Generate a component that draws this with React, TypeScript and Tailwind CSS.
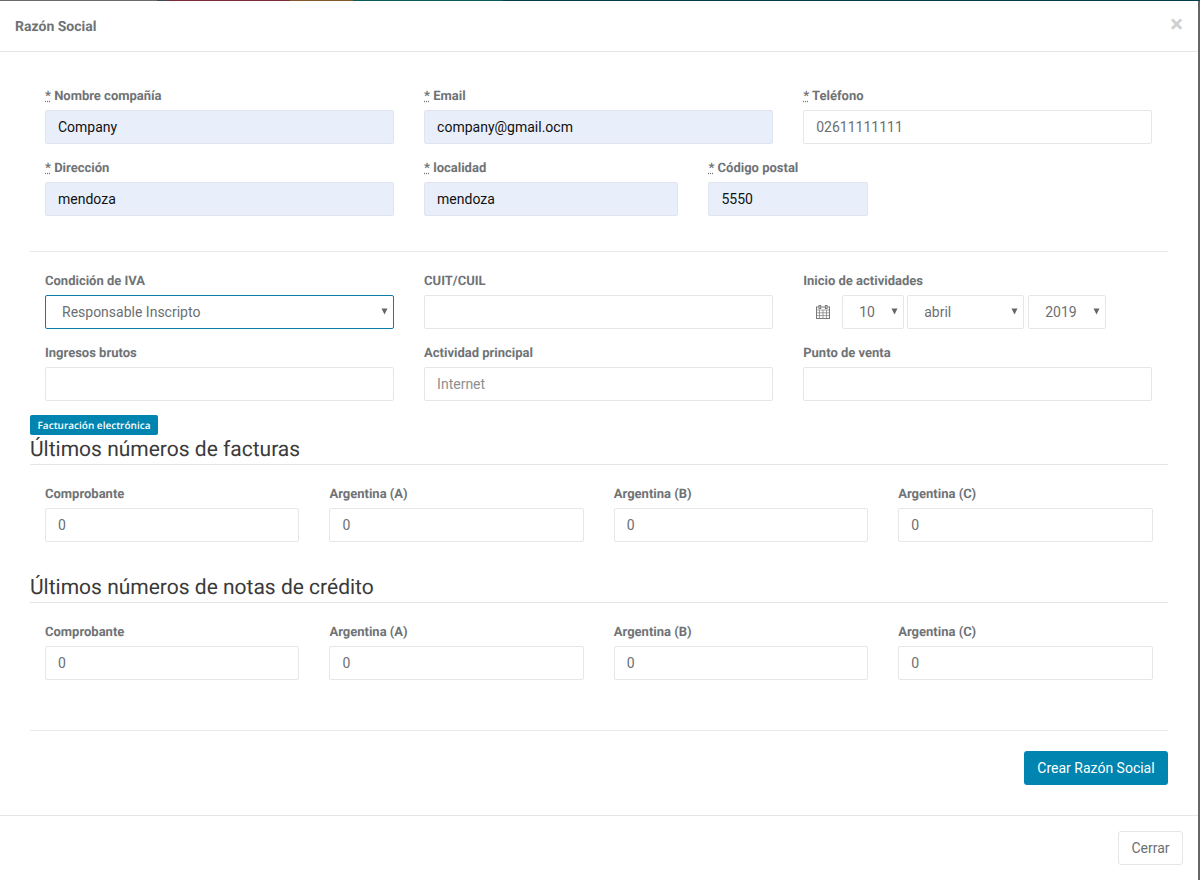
import React from "react";

const inputCls =
  "block w-full h-[34px] border border-[#e6e6e6] rounded-[2px] px-[12px] text-[14px] text-[#6b6f72] bg-white outline-none placeholder:text-[#8f8f8f]";
const autoCls =
  "block w-full h-[34px] border border-[#e0e4ec] rounded-[2px] px-[12px] text-[14px] text-[#111] bg-[#e8effb] outline-none";

function Label({ text, req }: { text: string; req?: boolean }) {
  return (
    <label className="block h-5 mb-[5px] text-[13px] leading-6 font-bold text-[#6f7376] whitespace-nowrap">
      {req && <abbr title="requerido">*</abbr>}
      {req && " "}
      {text}
    </label>
  );
}

function Arrow() {
  return (
    <svg
      className="absolute right-[6px] top-[13px] pointer-events-none"
      width="7"
      height="7"
      viewBox="0 0 7 7"
    >
      <path d="M0.5 0.5h6L3.5 6.5z" fill="#666" />
    </svg>
  );
}

function Sel({ value, cls }: { value: string; cls?: string }) {
  return (
    <div className="relative">
      <select
        defaultValue={value}
        className={
          "block w-full h-[34px] appearance-none rounded-[2px] pl-[16px] pr-4 text-[14px] text-[#6b6f72] bg-white outline-none border " +
          (cls ?? "border-[#e6e6e6]")
        }
      >
        <option>{value}</option>
      </select>
      <Arrow />
    </div>
  );
}

function Calendar() {
  return (
    <svg width="14" height="14" viewBox="0 0 14 14" fill="none" stroke="#7a7a7a" strokeWidth="1">
      <rect x="0.5" y="2" width="13" height="11.5" />
      <path d="M0.5 5h13M0.5 7.8h13M0.5 10.6h13M3.5 5v8.5M7 5v8.5M10.5 5v8.5" strokeWidth="0.7" />
      <rect x="3" y="0.5" width="1.6" height="3" fill="#fff" />
      <rect x="9.4" y="0.5" width="1.6" height="3" fill="#fff" />
    </svg>
  );
}

function Numbers() {
  return (
    <div className="grid grid-cols-12 mr-[0.4px]">
      {["Comprobante", "Argentina (A)", "Argentina (B)", "Argentina (C)"].map((t) => (
        <div key={t} className="col-span-3 px-[15px]">
          <Label text={t} />
          <input className={inputCls} defaultValue="0" />
        </div>
      ))}
    </div>
  );
}

export default function App() {
  return (
    <div className="w-[1200px] h-[880px] overflow-hidden bg-[#666] font-['Roboto',sans-serif] [text-rendering:geometricPrecision] flex flex-col">
      <div className="flex h-px shrink-0">
        <div className="w-[157px] bg-[#6a6a6a]" />
        <div className="w-[10px] bg-[#3b4a50]" />
        <div className="w-[123px] bg-[#7c2a3c]" />
        <div className="w-[63px] bg-[#82592c]" />
        <div className="w-[150px] bg-[#0b5a5c]" />
        <div className="flex-1 bg-[#063c4c]" />
      </div>
      <div className="w-[1198px] flex-1 bg-white flex flex-col">
        <div className="h-[50px] shrink-0 border-b border-[#e5e5e5] box-content flex items-center justify-between pl-[15px] pr-[15px]">
          <h4 className="text-[14px] font-bold text-[#6f7376] leading-5 mt-[2px]">Razón Social</h4>
          <span className="text-[24px] leading-none font-bold text-[#d0d0d0] mt-[-4px]">×</span>
        </div>

        <form className="px-[30px] pt-[33px] h-[764px] shrink-0 border-b border-[#e5e5e5]">
          <div className="grid grid-cols-12 gap-y-[13px] mr-[0.7px]">
            <div className="col-span-4 px-[15px]">
              <Label req text="Nombre compañía" />
              <input className={autoCls} defaultValue="Company" />
            </div>
            <div className="col-span-4 px-[15px]">
              <Label req text="Email" />
              <input className={autoCls} defaultValue="company@gmail.ocm" />
            </div>
            <div className="col-span-4 px-[15px]">
              <Label req text="Teléfono" />
              <input className={inputCls} defaultValue="02611111111" />
            </div>
            <div className="col-span-4 px-[15px]">
              <Label req text="Dirección" />
              <input className={autoCls} defaultValue="mendoza" />
            </div>
            <div className="col-span-3 px-[15px]">
              <Label req text="localidad" />
              <input className={autoCls} defaultValue="mendoza" />
            </div>
            <div className="col-span-2 px-[15px]">
              <Label req text="Código postal" />
              <input className={autoCls} defaultValue="5550" />
            </div>
          </div>

          <hr className="mt-[35px] mb-[18px] border-[#e8e8e8]" />

          <div className="grid grid-cols-12 gap-y-[13px] mr-[0.7px]">
            <div className="col-span-4 px-[15px]">
              <Label text="Condición de IVA" />
              <Sel value="Responsable Inscripto" cls="border-[#0a7ea8]" />
            </div>
            <div className="col-span-4 px-[15px]">
              <Label text="CUIT/CUIL" />
              <input className={inputCls} />
            </div>
            <div className="col-span-4 px-[15px]">
              <Label text="Inicio de actividades" />
              <div className="flex items-center">
                <div className="w-[39px] flex justify-center">
                  <Calendar />
                </div>
                <div className="w-[62px]">
                  <Sel value="10" />
                </div>
                <div className="w-[117px] ml-[3px]">
                  <Sel value="abril" />
                </div>
                <div className="w-[78px] ml-[4px]">
                  <Sel value="2019" />
                </div>
              </div>
            </div>
            <div className="col-span-4 px-[15px]">
              <Label text="Ingresos brutos" />
              <input className={inputCls} />
            </div>
            <div className="col-span-4 px-[15px]">
              <Label text="Actividad principal" />
              <input className={inputCls} placeholder="Internet" />
            </div>
            <div className="col-span-4 px-[15px]">
              <Label text="Punto de venta" />
              <input className={inputCls} />
            </div>
          </div>

          <span className="mt-[14px] block w-[128px] h-5 rounded-[2px] bg-[#0084b0] text-white text-[10px] font-semibold font-['Open_Sans',sans-serif] leading-5 text-center whitespace-nowrap">
            Facturación electrónica
          </span>
          <h3 className="h-[30px] border-b border-[#e5e5e5] text-[21px] leading-[30px] text-[#3a3a3a]">
            Últimos números de facturas
          </h3>
          <div className="mt-[18px]">
            <Numbers />
          </div>

          <h3 className="mt-[31px] h-[30px] border-b border-[#e5e5e5] text-[21px] leading-[30px] text-[#3a3a3a]">
            Últimos números de notas de crédito
          </h3>
          <div className="mt-[18px]">
            <Numbers />
          </div>

          <hr className="mt-[50px] border-[#e8e8e8]" />
          <div className="mt-[20px] flex justify-end">
            <button
              type="button"
              className="w-[144px] h-[34px] rounded-[3px] bg-[#0084b0] text-white text-[14px]"
            >
              Crear Razón Social
            </button>
          </div>
        </form>

        <div className="flex-1 flex justify-end pt-[15px] pr-[15px]">
          <button
            type="button"
            className="w-[65px] h-[34px] rounded-[3px] border border-[#e6e6e6] bg-white text-[#6b6f72] text-[14px]"
          >
            Cerrar
          </button>
        </div>
      </div>
    </div>
  );
}
